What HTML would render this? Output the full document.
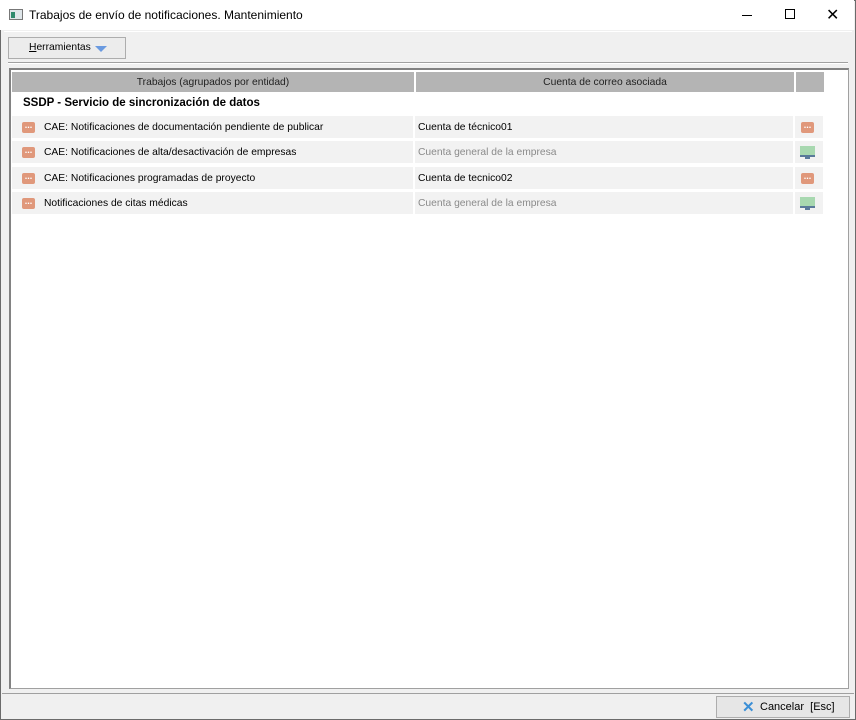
<!DOCTYPE html>
<html><head><meta charset="utf-8"><style>
*{margin:0;padding:0;box-sizing:border-box}
body{width:856px;height:720px;background:#f0f0f0;font-family:"Liberation Sans",sans-serif;font-size:12px;color:#000;position:relative;overflow:hidden}
.win{position:absolute;left:0;top:0;width:856px;height:720px;border:1px solid #6b6b6b}
.title{position:absolute;left:0;top:0;width:854px;height:30px;background:#fff}
.title .t{position:absolute;left:29px;top:8px;font-size:12px;color:#000}
.ctl{position:absolute;top:6px;font-size:14px;color:#000}
.btn{position:absolute;background:#e9e9e9;border:1px solid #adadad}
.panel{position:absolute;left:9px;top:68px;width:840px;height:621px;border:1px solid #a0a0a0;border-top:2px solid #828282;border-left:2px solid #828282;background:#fff}
.hd{position:absolute;top:2px;height:20px;background:#b4b4b4;text-align:center;line-height:21px;font-size:10.3px;color:#222}
.row{position:absolute;height:22px;background:#f2f2f2;line-height:23px;font-size:10.3px}
.ic{position:absolute;width:13px;height:11px;background:#e0987b;border-radius:2px;color:#fff;font-size:9px;line-height:6px;text-align:center;font-weight:bold}
.gray{color:#8a8a8a}
</style></head><body>
<div class="win"></div>
<div class="title">
<div style="position:absolute;left:9px;top:9px;width:14px;height:11px;border:1px solid #777;background:#dfe6ea"><div style="position:absolute;left:1px;top:2px;width:4px;height:6px;background:#2f8a6e"></div></div>
<div class="t">Trabajos de envío de notificaciones. Mantenimiento</div>
<div style="position:absolute;left:742px;top:15px;width:10px;height:1px;background:#000"></div>
<div style="position:absolute;left:785px;top:9px;width:10px;height:10px;border:1px solid #000"></div>
<div class="ctl" style="left:826px;top:5px;font-size:16px">✕</div>
</div>
<div style="position:absolute;left:4px;top:31px;width:848px;height:1px;background:#fff"></div>
<div class="btn" style="left:8px;top:37px;width:118px;height:22px;background:#ececec"><span style="position:absolute;left:20px;top:4px;font-size:10.3px"><u>H</u>erramientas</span><span style="position:absolute;left:86px;top:8px;width:0;height:0;border-left:6px solid transparent;border-right:6px solid transparent;border-top:6px solid #6a9ae0"></span></div>
<div style="position:absolute;left:8px;top:62px;width:840px;height:1px;background:#a0a0a0"></div>
<div style="position:absolute;left:8px;top:63px;width:840px;height:1px;background:#fff"></div>
<div class="panel">
<div class="hd" style="left:1px;width:402px">Trabajos (agrupados por entidad)</div>
<div class="hd" style="left:405px;width:378px">Cuenta de correo asociada</div>
<div class="hd" style="left:785px;width:28px"></div>
<div style="position:absolute;left:12px;top:27px;font-weight:bold;font-size:11.5px">SSDP - Servicio de sincronización de datos</div>
</div>
<div class="row" style="left:12px;top:116px;width:401px"><div class="ic" style="left:10px;top:6px">...</div><span style="position:absolute;left:32px">CAE: Notificaciones de documentación pendiente de publicar</span></div>
<div class="row" style="left:415px;top:116px;width:378px"><span style="position:absolute;left:3px">Cuenta de técnico01</span></div>
<div class="row" style="left:795px;top:116px;width:28px"><div class="ic" style="left:6px;top:6px">...</div></div>
<div class="row" style="left:12px;top:141px;width:401px"><div class="ic" style="left:10px;top:6px">...</div><span style="position:absolute;left:32px">CAE: Notificaciones de alta/desactivación de empresas</span></div>
<div class="row gray" style="left:415px;top:141px;width:378px"><span style="position:absolute;left:3px">Cuenta general de la empresa</span></div>
<div class="row" style="left:795px;top:141px;width:28px"><div style="position:absolute;left:5px;top:5px;width:15px;height:9px;background:#a8d8b0"></div><div style="position:absolute;left:5px;top:14px;width:15px;height:2px;background:#5a7a9a"></div><div style="position:absolute;left:10px;top:16px;width:5px;height:2px;background:#5a7a9a"></div></div>
<div class="row" style="left:12px;top:167px;width:401px"><div class="ic" style="left:10px;top:6px">...</div><span style="position:absolute;left:32px">CAE: Notificaciones programadas de proyecto</span></div>
<div class="row" style="left:415px;top:167px;width:378px"><span style="position:absolute;left:3px">Cuenta de tecnico02</span></div>
<div class="row" style="left:795px;top:167px;width:28px"><div class="ic" style="left:6px;top:6px">...</div></div>
<div class="row" style="left:12px;top:192px;width:401px"><div class="ic" style="left:10px;top:6px">...</div><span style="position:absolute;left:32px">Notificaciones de citas médicas</span></div>
<div class="row gray" style="left:415px;top:192px;width:378px"><span style="position:absolute;left:3px">Cuenta general de la empresa</span></div>
<div class="row" style="left:795px;top:192px;width:28px"><div style="position:absolute;left:5px;top:5px;width:15px;height:9px;background:#a8d8b0"></div><div style="position:absolute;left:5px;top:14px;width:15px;height:2px;background:#5a7a9a"></div><div style="position:absolute;left:10px;top:16px;width:5px;height:2px;background:#5a7a9a"></div></div>
<div style="position:absolute;left:2px;top:693px;width:852px;height:1px;background:#a0a0a0"></div>
<div class="btn" style="left:716px;top:696px;width:134px;height:22px;background:#e6e6e6"><span style="position:absolute;left:25px;top:1px;color:#3b8fd6;font-size:15px;font-weight:bold">✕</span><span style="position:absolute;left:43px;top:4px;font-size:11px">Cancelar&nbsp; [Esc]</span></div>
</body></html>
